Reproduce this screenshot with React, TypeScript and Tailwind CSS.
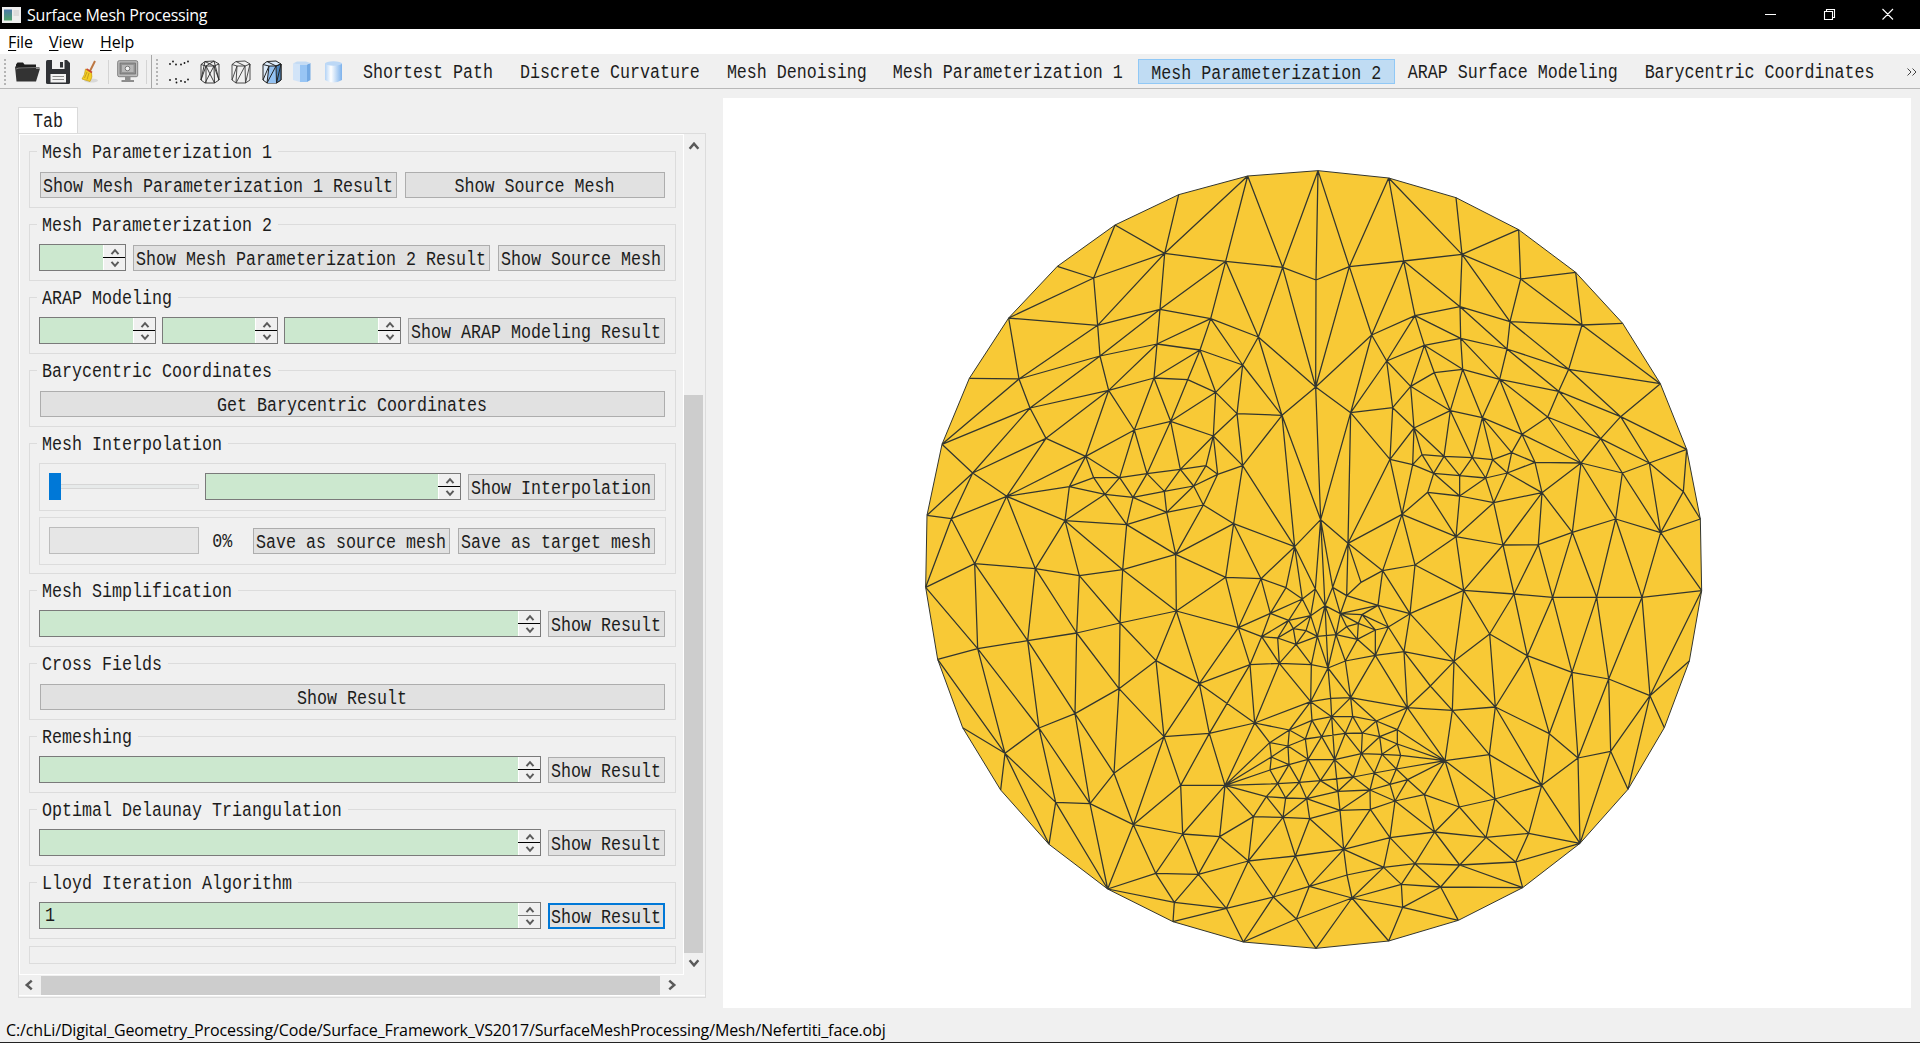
import React from 'react';

type Pt = [number, number];

/* Mesh vertices, grouped by patch. Units are thirds of a pixel. */
const PATCHES: Record<string, { at: Pt; pts: string }> = {
  A: {
    at: [0, 0],
    pts: '1224,62 1013,78 806,134 615,225 442,349 296,504 178,685 96,883 764,310 551,384 947,334 1118,352 1218,390 563,526 750,478 902,506 1045,561 327,687 570,618 741,582 870,600 998,645 1217,711 360,774 596,721 732,684 833,689 917,727 981,791 1116,796 408,865 673,840 782,814 910,858',
  },
  B: {
    at: [1170, 0],
    pts: '54,62 266,84 468,143 656,239 827,367 968,520 1081,701 1160,898 148,350 311,333 486,313 662,387 846,525 630,515 480,470 345,497 215,555 260,633 373,586 482,565 621,597 806,658 776,724 599,688 488,658 403,668 332,709 278,773 152,788 451,782 547,803 743,801 962,800 902,866 666,853 342,834',
  },
  C: {
    at: [0, 840],
    pts: '0,0 188,129 527,79 290,199 51,256 124,266 47,472 194,401 376,416 465,272 478,170 551,143 629,143 585,193 669,202 711,131 811,118 888,107 763,184 851,168 923,133 998,107 650,284 770,247 880,225 971,281 797,373 638,419 508,437 1154,350 1232,269 947,442 1053,446 799,543 630,579 500,609 353,632 203,656 83,688 985,593 738,692 868,761 627,776 1020,704 1128,473 1177,507 1216,477 1081,550 1245,527 1202,557 1136,571 1150,596 1188,602 1222,619 1055,620 1103,624 1158,643 1108,700 1204,704 1254,714 1202,815',
  },
  D: {
    at: [1170, 840],
    pts: '0,0 270,88 338,104 366,74 432,79 517,83 578,89 635,68 705,97 843,99 967,129 1048,99 1150,185 1201,267 401,130 479,137 557,144 622,129 383,187 479,198 581,218 726,188 306,253 144,340 468,320 609,345 715,344 817,307 947,267 1082,308 248,422 345,405 491,481 642,492 758,502 890,502 1026,502 1205,482 183,457 98,472 140,497 234,526 330,551 121,551 186,554 175,580 265,591 226,600 108,614 172,628 140,590 226,676 312,665 462,694 569,612 682,677 816,727 926,747 1050,797 1168,693 136,693 152,803 322,833 586,831 92,805 391,768',
  },
  E: {
    at: [0, 1620],
    pts: '0,0 158,113 272,300 417,463 593,597 789,695 1000,756 1218,775 285,190 387,114 495,71 437,337 540,341 612,250 670,404 762,140 898,130 1034,99 812,286 945,286 818,432 929,440 737,550 865,553 793,637 949,655 1015,513 1030,380 1119,382 1199,386 1069,320 1127,324 1190,326 1156,498 1090,621 1198,589 1159,687 1103,281 1168,277 1231,272 1080,240 1137,224 1194,208 1084,201 1079,158 1138,120 1134,168 1186,147 1206,91 1235,140',
  },
  F: {
    at: [1170, 1620],
    pts: '0,0 1093,113 984,298 840,460 668,593 475,691 266,753 95,80 152,23 158,79 229,93 136,130 187,129 239,140 292,119 292,162 246,193 302,196 184,191 104,209 160,261 223,249 289,237 323,269 270,283 210,300 114,304 285,333 373,314 211,358 120,361 435,212 478,351 457,61 568,194 585,327 725,286 748,131 834,204 932,184 586,51 686,430 558,442 404,426 270,443 131,478 141,555 251,532 345,521 479,525 647,516 422,591 304,583 308,652 156,624',
  },
};

const V: Record<string, Pt> = {};
Object.entries(PATCHES).forEach(([k, { at, pts }]) =>
  pts.split(' ').forEach((s, i) => {
    const [x, y] = s.split(',').map(Number);
    V[k + i] = [x + at[0], y + at[1]];
  }),
);

const RIM =
  'A0 B1 B2 B3 B4 B5 B6 B7 D13 D37 D59 F1 F2 F3 F4 F5 F6 E7 E6 E5 E4 E3 E2 E1 C38 C6 C4 A7 A6 A5 A4 A3 A2 A1';

/* Each entry is a hub vertex followed by the vertices it connects to. */
const STARS = `
A8:A2 A1 A3 A9 A13 A14 A10|A9:A3 A4 A5 A13|A5:A13 A17|A10:A1 A11 A14 A15 A16|A11:A1 A0 A12 A16 A22|A12:A0 A22
A13:A14 A17 A18|A14:A15 A18 A19|A15:A16 A19 A20 A21|A16:A21 A29 A22|A17:A6 A18 A23 A7|A18:A23 A19 A24|A19:A24 A20 A25
A20:A25 A26 A27 A21|A26:A32 A25 A27|A21:A27 A28 A29|A28:A29 A27 A33 C21|A27:A32 A33|A23:A24 A7 A30 C1|A30:A24 C1 C3 C2
A24:A25 A31 C2|A25:A31 A32|A31:A32 C2 C12 C15|A32:A33 C15 C16|A33:C16|A29:A22 C21 C29 C30|A22:C30
B8:A0 B1 B9 A12 A22 B16|B9:B1 B10 B16 B15 B14|B10:B1 B2 B3 B11 B14 B13|B11:B3 B4 B13 B12|B12:B4 B5 B13 B21 B6
B13:B14 B20 B21|B14:B15 B19 B20|B15:B16 B17 B18 B19|B16:B17 B28 A22|B17:B18 B26 B27 B28|B18:B19 B26 B24 B25|B25:B29 B24 B26
B19:B24 B20 B23|B20:B21 B23 B22|B21:B6 B22 B32|B32:B6 B22 B33 B7 D11|B22:B23 B31 B33|B23:B24 B30 B31 B34|B24:B29 B30
B26:B27 B29 B35|B27:B28 B35 D1|B28:A22 C30 D23 D1|B29:B30 B35 D4 D5|B30:B34 D5 D6 D7|B31:B34 B33 D9|B34:D7 D8 D9|B33:D9 D10 D11
B35:D1 D2 D3 D4|B7:D11 D12
C1:A7 C4 C5 C3|C5:C4 C3 C6 C7|C3:C7 C8 C9 C10 C2|C2:C10 C11 C12|C10:C11 C13 C9|C11:C12 C13|C12:C13 C14 C15|C13:C14 C9 C22
C14:C15 C18 C22 C23|C15:C16 C18|C16:C18 C17 C19|C17:C19 C20 A33|A33:C20 C21|C20:C21 C19 C24|C19:C18 C23 C24|C18:C23|C23:C24 C22 C26
C22:C9 C26 C27|C24:C26 C25|C25:C21 C26 C29 C31 C32|C21:C29|C9:C8 C28 C27|C8:C7 C28 C35 C36|C27:C28 C26 C33 C34|C26:C31 C33
C28:C34 C35|C7:C6 C36 C37|C37:C6 C38 C36|C35:C36 C34 C42|C34:C33 C40 C42|C33:C31 C39 C40 C41|C31:C32 C39|C40:C42 C41|C41:C39 C43
C39:C43 C32 C47 C54|C32:C29 C44 C47|C29:C30 C44 C45 C46|C44:C45 C47|C47:C45 C50 C54|C45:C46 C50 C49|C50:C49 C51 C54 C55|C49:C51 C53 C52 C48 C46
C51:C52 C55 C56|C52:C53 C56|C56:C53 C55 C57 C58|C54:C55 C57 C43|C55:C57|C57:C43 C58 C60|C58:C53 C59 C60|C59:C53 C60|C46:C48 C30|C48:C53 C30
D1:D2 D22 D23|D2:D3 D14 D22|D3:D4 D14|D4:D5 D14 D15|D5:D6 D15 D16|D6:D7 D16 D17|D7:D8 D17|D8:D9 D17 D21|D9:D10 D21 D27 D28
D10:D11 D28 D29|D11:D12 D29|D12:D13 D29|D29:D13 D37 D36|D14:D15 D18 D19|D15:D16 D19|D16:D17 D19 D20|D17:D20 D21|D18:D19 D22 D24
D19:D20 D24|D20:D21 D24 D25|D21:D25 D26 D27|D22:D23 D24 D30 D31|D24:D25 D31 D32|D25:D26 D32 D33|D26:D33 D34 D27|D27:D28 D34 D35
D28:D29 D35 D36|D36:D35 D37 D57 D58|D33:D32 D34 D54 D55|D34:D35 D55 D56|D35:D56 D57|D30:D31 D38 D41 D42 D23|D31:D32 D42|D32:D42 D53 D54
D58:D37 D59 D57|D54:D53 D55 D63|D55:D56 D63|D56:D57|D42:D53 D52 D41 D46|D52:D53 D51 D62 D65 D46|D65:D53 D62 F33|D53:D63 F33
D51:D46 D47 D49 D60 D61 D62|D60:D61 C59 D49 D48|C59:D48 C48 D64 D61|D64:C60 D61 F7|D61:D62|D23:C30 D39 D40 D38|C30:C46 D39
D39:C48 D40 D43|D40:D38 D41 D43|D41:D44 D46 D43|D43:D44 D45 D50 D48 C48|D44:D45 D46 D47|D45:D50 D49 D47|D47:D46 D49|D48:D50 D49 C48 C53|D50:D49
E8:C38 C37 E1 E2 E3 E9 E11|E9:C37 C36 E10 E11 E12|E10:C36 C35 C42 E12 E13|C42:E13 E15|E15:C40 C41 E13 E14 E16 E18|E16:C41 C43 E17 E18 E19
E17:C41 C43 C57 C60 E19 E45 E44|C60:E45 E48 F7|E11:E12 E3 E4|E12:E13 E4 E14|E13:E14|E18:E19 E14 E20|E19:E20 E21 E27 E30 E37 E40 E43 E44
E44:E45 E46 E43|E43:E46 E41 E40|E40:E41 E37|E37:E41 E38 E30 E31|E30:E31 E28 E27|E31:E32 E28 E38|E32:E28 E38 E39 F26 F30 E29
E38:E39 E41 E42|E41:E42 E46|E46:E42 E45 E47|E45:E47 E48|E47:E48 E49 E42|E42:E49 E39 F19|E48:E49 F7|E29:E28 E33 F30 F45|E28:E27 E26 E33
E27:E21 E26|E33:E26 E34 E35 F45|E34:E26 E35 E36 E6 E25|E26:E25 E23 E21|E21:E20 E23|E20:E23 E22 E14|E14:E22 E4|E22:E4 E23 E24
E23:E24 E25|E24:E4 E5 E25|E25:E5 E6|E36:E6 E7 E35
D58:F1 F2 F39|D57:F38 F39|D56:F37 F38|D55:F37|D63:F37 F34 F33 F36|F33:D62 F31 F34|D62:F31 F10 F14|F34:F31 F35 F36|F37:F36 F38
F38:F36 F39 F3|F39:F3 F2|F36:F3 F35 F41|F35:F31 F32 F41 F42|F31:F32 F28 F23 F22 F17 F15 F14|F32:F28 F42 F43|F28:F23 F27 F43
F23:F22 F24 F27|F22:F21 F24 F17|F24:F21 F25 F27|F25:F21 F20 F26 F29 F30 F27|F27:F29 F44 F43|F29:F30 F45 F44|F30:F26 F45|F26:E39 F20
F20:E39 F19|F19:F26 E39 E49 F11 F7|F7:E49 F11 F9 D61|D61:F9 F10|F9:F11 F12 F10|F10:F12 F13 F14|F12:F11 F13 F18|F13:F14 F15 F16 F18
F11:F18 E49|F18:F19 F16 F20 F21|F16:F15 F17 F21 F22|F15:F14 F17|F21:F20|F45:E35 F44 F47 F46|F46:E35 F47 F54|F54:E35 E36 E7 F6 F52 F53
F47:F44 F54 F52 F48|F48:F44 F43 F49 F52 F51|F43:F44 F42 F49|F42:F41 F50 F49|F41:F3 F50|F50:F3 F4 F49|F49:F4 F51|F51:F4 F5 F52 F53
F53:F52 F5 F6`;

const rimPath = 'M' + RIM.split(' ').map((n) => V[n].join(' ')).join('L') + 'Z';
const edgePath = STARS.trim()
  .split(/[|\n]/)
  .map((s) => {
    const [hub, rest] = s.split(':');
    return rest
      .trim()
      .split(' ')
      .map((n) => `M${V[hub].join(' ')}L${V[n].join(' ')}`)
      .join('');
  })
  .join('');

function MeshView() {
  return (
    <svg width="840" height="820" viewBox="0 0 2520 2460" className="ml-[187px] mt-[52px] block">
      <path d={rimPath} fill="#f8c936" stroke="#33362f" strokeWidth="3" />
      <path d={edgePath} fill="none" stroke="#33362f" strokeWidth="3.8" />
    </svg>
  );
}

const UI = "font-['Open_Sans',sans-serif] text-[16px] whitespace-pre";

/* Fixed-pitch label: ten pixels per character, stretched to tall, narrow letterforms. */
function Mono({ children, className = '' }: { children: React.ReactNode; className?: string }) {
  return (
    <span
      className={`inline-block scale-y-[1.16] font-['Liberation_Mono',monospace] text-[16.67px] leading-[20px] whitespace-pre text-[#1c1c1c] ${className}`}
    >
      {children}
    </span>
  );
}

function Btn({ children, className = '', focus = false }: { children: string; className?: string; focus?: boolean }) {
  return (
    <button
      className={`flex h-[26px] shrink-0 items-center justify-center bg-[#e1e1e1] pt-[3px] ${
        focus ? 'border-2 border-[#0078d7]' : 'border border-[#adadad]'
      } ${className}`}
    >
      <Mono className="-ml-px">{children}</Mono>
    </button>
  );
}

function Chevron({ className = '' }: { className?: string }) {
  return (
    <svg width="10" height="8" viewBox="0 0 10 8" className={className}>
      <path d="M1.5 6.2 5 2.2 8.5 6.2" fill="none" stroke="#5a5a5a" strokeWidth="2" />
    </svg>
  );
}

function Spin({ className = '', value = '', soft = false }: { className?: string; value?: string; soft?: boolean }) {
  return (
    <div className={`flex h-[27px] shrink-0 border border-[#7a7a7a] bg-[#cce8cf] ${className}`}>
      <div className="flex flex-1 items-center pl-[5px] pt-px"><Mono>{value}</Mono></div>
      <div className="flex w-[22px] flex-col border-l border-white bg-[#f0f0f0]">
        <div className="flex h-[12px] items-center justify-center pt-px">
          <Chevron />
        </div>
        <div className={`-ml-px h-px ${soft ? 'bg-[#7a7a7a]' : 'bg-black'}`} />
        <div className="flex h-[12px] items-center justify-center">
          <Chevron className="rotate-180" />
        </div>
      </div>
    </div>
  );
}

function Group({ title, children, tall = false }: { title: string; children: React.ReactNode; tall?: boolean }) {
  return (
    <section className={`relative mb-4 border border-[#dcdcdc] px-[10px] pt-[19px] ${tall ? 'h-[131px]' : 'h-[57px]'}`}>
      <h2 className="absolute -top-[9px] left-[7px] flex bg-[#f0f0f0] pl-[5px] pr-[6px]"><Mono>{title}</Mono></h2>
      {children}
    </section>
  );
}

function ResultRow({ value = '', focus = false }: { value?: string; focus?: boolean }) {
  return (
    <div className="-ml-px flex items-end justify-between">
      <Spin className="w-[502px]" value={value} soft={focus} />
      <Btn className="w-[117px]" focus={focus}>Show Result</Btn>
    </div>
  );
}

function Grip() {
  return <div className="h-[26px] w-0 border-l-2 border-dotted border-[#b4b4b4]" />;
}

const TOOLS: [string, string][] = [
  ['Shortest Path', 'ml-[20px]'],
  ['Discrete Curvature', 'ml-[27px]'],
  ['Mesh Denoising', 'ml-[27px]'],
  ['Mesh Parameterization 1', 'ml-[26px]'],
];

const CYL = 'M3 4.5 7 1.5 16 1 21 4 21 20 16.500 23 7 23 3 20Z';

function ToolIcons() {
  return (
    <div className="flex h-[33px] items-center">
      <svg className="ml-[9px]" width="25" height="22" viewBox="0 0 25 22">
        <path d="M1 3.500 2.500 1.500H8L9.500 3.500H21V8H1Z" fill="#1e1e1e" />
        <path d="M0 5.500H3L6 7.500H25L21 20.500H1.500Z" fill="#333" />
        <path d="M1 8 4 7 24.500 6.500" stroke="#777" fill="none" />
      </svg>
      <svg className="ml-[6px]" width="24" height="24" viewBox="0 0 24 24">
        <path d="M1.500 0H21L24 3V22.500Q24 24 22.500 24H1.500Q0 24 0 22.500V1.500Q0 0 1.500 0Z" fill="#303236" />
        <path d="M6 0H18.500V9H6ZM4.500 14H20V22.500H4.500Z" fill="#f2f2f2" />
        <path d="M14 2H17V7.500H14Z" fill="#303236" />
        <path d="M6.500 16.500H18M6.500 19.500H18" stroke="#888" />
      </svg>
      <svg className="ml-[11px]" width="18" height="24" viewBox="0 0 18 24">
        <ellipse cx="10" cy="20.500" rx="7" ry="2" fill="#d8d8d8" />
        <path d="M14 1 8 13" stroke="#bd7742" strokeWidth="2" />
        <path d="M4.500 9 10.500 12.500Q12 17 9 21.500L1 19Q4 15 4.500 9Z" fill="#f4cf25" stroke="#c79d16" strokeWidth=".7" />
        <path d="M5.500 9 11 12.500" stroke="#c94832" strokeWidth="1.600" />
        <path d="M6 12 3.500 18M8 13 6 19.500" stroke="#b58b18" strokeWidth=".7" />
      </svg>
      <div className="ml-[9px] h-6 w-px bg-[#d4d4d4]" />
      <svg className="ml-2" width="22" height="23" viewBox="0 0 22 23">
        <rect x=".7" y=".7" width="20" height="16" rx="1.500" fill="#bcbcbc" stroke="#818181" />
        <rect x="3" y="3" width="15.500" height="11" fill="#929292" stroke="#686868" strokeWidth=".7" />
        <rect x="5" y="5" width="11.500" height="7" fill="#b7b7b7" />
        <circle cx="10.500" cy="8.500" r="2.300" fill="#f4f4f4" stroke="#777" />
        <path d="M8 17H13.500V20H17V22H4.500V20H8Z" fill="#8d8d8d" />
      </svg>
      <div className="ml-[7px] h-6 w-px bg-[#d4d4d4]" />
      <div className="ml-[4px] h-[33px] w-px bg-[#a8a8a8]" />
      <div className="mr-[10px] ml-[4px]"><Grip /></div>
      <svg width="22" height="24" viewBox="0 0 22 24" fill="#111">
        {[[2, 4], [5, 1.500], [8, 4.500], [13, 4.500], [16.500, 3], [20, 1.500], [2, 20], [8, 19], [8.500, 22.500], [13, 21], [17, 22], [20, 19.500]].map(
          ([x, y]) => <circle key={`${x}-${y}`} cx={x} cy={y} r=".9" />,
        )}
      </svg>
      <svg className="ml-2" width="24" height="24" viewBox="0 0 24 24" fill="none" stroke="#2a2a2a" strokeWidth=".9">
        <path d={`${CYL}M3 4.500 8 6 16 6 21 4M8 6 8 23M16 6 16.500 23M7 1.500 16 6M8 6 16 1M8 6 3 20M8 6 16.500 23M16 6 7 23M16 6 21 20M7 1.500 3 20M16 1 21 20`} />
      </svg>
      <svg className="ml-[7px]" width="24" height="24" viewBox="0 0 24 24" fill="none" stroke="#3a3a3a" strokeWidth=".9">
        <path d={`${CYL}M3 4.500 8 6 16 6 21 4M8 6 7 23M16 6 16.500 23M7 1.500 16 6M16 6 7 23M8 6 3 20M21 4 16.500 23`} />
      </svg>
      <svg className="ml-[7px]" width="24" height="24" viewBox="0 0 24 24" stroke="#222" strokeWidth="1">
        <path d={CYL} fill="#dcebfa" />
        <path d="M9 6H16L16.500 23H7Z" fill="#94c2f2" stroke="none" />
        <path d="M16 6 21 4V20L16.500 23Z" fill="#4d85bd" />
        <path d="M3 4.500 9 6 16 6 21 4M9 6 7 23M16 6 7 23M9 6 3 20M7 1.500 16 6M21 4 16.500 23" fill="none" />
      </svg>
      <svg className="ml-[8px]" width="20" height="24" viewBox="0 0 20 24">
        <path d="M1 3.500 8 4.500V22L1 20Z" fill="#d2e4f8" />
        <path d="M8 4.500 15 4.500V22H8Z" fill="#98c5f4" />
        <path d="M15 4.500 18.500 3V20L15 22Z" fill="#73a9e3" />
        <path d="M1 3.500 5 1.500 14 1.500 18.500 3 15 4.500 8 4.500Z" fill="#c4dbf4" />
      </svg>
      <svg className="ml-[12px] -mr-px" width="20" height="24" viewBox="0 0 20 24">
        <defs>
          <linearGradient id="cyl">
            <stop offset="0" stopColor="#b3d3f6" />
            <stop offset=".35" stopColor="#fff" />
            <stop offset="1" stopColor="#7db2ec" />
          </linearGradient>
        </defs>
        <path d="M1 3.500V20Q9 25 18 20V3.500Z" fill="url(#cyl)" />
        <ellipse cx="9.500" cy="3.500" rx="8.500" ry="2.200" fill="#bcd8f6" />
      </svg>
    </div>
  );
}

export default function App() {
  return (
    <div className="flex h-[1043px] w-[1920px] flex-col overflow-hidden border-b border-[#222] bg-[#f0f0f0]">
      <header className="flex h-[29px] shrink-0 items-center bg-black text-white">
        <svg className="ml-[2px]" width="19" height="16" viewBox="0 0 19 16">
          <defs>
            <linearGradient id="app" x2="0" y2="1">
              <stop stopColor="#4b78a8" />
              <stop offset="1" stopColor="#4fa46c" />
            </linearGradient>
          </defs>
          <path d="M0 0H19V16H0Z" fill="#eee" />
          <path d="M2 2.500H10V13.500H2Z" fill="url(#app)" />
          <path d="M11.500 3H17V9H11.500Z" fill="#dcdcdc" />
        </svg>
        <div className={`${UI} ml-[6px] w-[184px] tracking-[-0.22px]`}>Surface Mesh Processing</div>
        <svg className="ml-auto mr-[26px]" width="130" height="16" viewBox="0 0 130 16" fill="none" stroke="#fff" strokeWidth="1.100">
          <path d="M1 7.500H12M60.500 4.500H68.500V12.500H60.500ZM62.500 4V2.500H70.500V10.500H69M118.500 2 129 12.500M129 2 118.500 12.500" />
        </svg>
      </header>
      <nav className={`${UI} flex h-[26px] shrink-0 items-center border-b border-[#f0f0f0] bg-white pl-2 text-black tracking-[-0.1px]`}>
        <span className="w-[41px]"><u className="underline-offset-2">F</u>ile</span>
        <span className="w-[51px]"><u className="underline-offset-2">V</u>iew</span>
        <span><u className="underline-offset-2">H</u>elp</span>
      </nav>
      <div className="flex h-[34px] shrink-0 items-center border-b border-[#b8b8b8] pl-1">
        <Grip />
        <ToolIcons />
        {TOOLS.map(([label, gap]) => (
          <Mono key={label} className={`mt-[3px] ${gap}`}>{label}</Mono>
        ))}
        <div className="ml-[15px] flex h-[25px] w-[257px] items-center justify-center border border-[#90c8f6] bg-[#c0dcf3] pt-[4px]"><Mono>Mesh Parameterization 2</Mono></div>
        <Mono className="mt-[3px] ml-[13px]">ARAP Surface Modeling</Mono>
        <Mono className="mt-[3px] ml-[27px]">Barycentric Coordinates</Mono>
        <svg className="ml-[32px]" width="10" height="8" viewBox="0 0 10 8" fill="none" stroke="#444">
          <path d="M.5.500 4 4 .5 7.500M5.500.500 9 4 5.500 7.500" />
        </svg>
      </div>

      <main className="flex h-[923px] shrink-0">
        <div className="w-[705px] shrink-0 pl-[18px] pt-[18px]">
          <div className="flex h-[26px] w-[60px] items-center border border-b-0 border-[#d9d9d9] bg-white pl-[14px] pt-[2px]"><Mono>Tab</Mono></div>
          <div className="flex h-[865px] w-[688px] flex-col border border-[#dcdcdc]">
            <div className="flex h-[841px]">
              <div className="h-[841px] w-[665px] shrink-0 border border-white pl-[9px] pr-[7px] pt-[16px]">
                <Group title="Mesh Parameterization 1">
                  <div className="flex justify-between pt-px"><Btn className="w-[357px]">Show Mesh Parameterization 1 Result</Btn><Btn className="w-[260px]">Show Source Mesh</Btn></div>
                </Group>
                <Group title="Mesh Parameterization 2">
                  <div className="-ml-px flex items-end"><Spin className="w-[87px]" /><Btn className="ml-[7px] w-[357px]">Show Mesh Parameterization 2 Result</Btn><Btn className="ml-auto w-[167px]">Show Source Mesh</Btn></div>
                </Group>
                <Group title="ARAP Modeling">
                  <div className="-ml-px flex items-end gap-[6px]"><Spin className="w-[117px]" /><Spin className="w-[116px]" /><Spin className="w-[117px]" /><Btn className="ml-auto w-[257px]">Show ARAP Modeling Result</Btn></div>
                </Group>
                <Group title="Barycentric Coordinates">
                  <Btn className="mt-px w-full">Get Barycentric Coordinates</Btn>
                </Group>
                <Group title="Mesh Interpolation" tall>
                  <div className="-mx-px mb-[6px] flex h-[48px] items-end border border-[#dcdcdc] pr-[10px] pl-[9px] pb-[10px]">
                    <div className="flex h-[27px] w-[150px] items-center">
                      <div className="h-[27px] w-[12px] bg-[#0078d7]" />
                      <div className="h-[5px] flex-1 border border-l-0 border-[#d6d6d6] bg-[#e7eaea]" />
                    </div>
                    <Spin className="ml-[6px] w-[256px]" />
                    <Btn className="ml-auto w-[187px]">Show Interpolation</Btn>
                  </div>
                  <div className="-mx-px flex h-[48px] items-end border border-[#dcdcdc] pr-[10px] pl-[9px] pb-[10px]">
                    <div className="h-[27px] w-[151px] border border-[#bcbcbc] bg-[#e6e6e6]" />
                    <Mono className="mb-[2px] ml-[13px] w-[41px]">0%</Mono>
                    <Btn className="w-[197px]">Save as source mesh</Btn>
                    <Btn className="ml-[8px] w-[197px]">Save as target mesh</Btn>
                  </div>
                </Group>
                <Group title="Mesh Simplification"><ResultRow /></Group>
                <Group title="Cross Fields">
                  <Btn className="mt-px w-full">Show Result</Btn>
                </Group>
                <Group title="Remeshing"><ResultRow /></Group>
                <Group title="Optimal Delaunay Triangulation"><ResultRow /></Group>
                <Group title="Lloyd Iteration Algorithm"><ResultRow value="1" focus /></Group>
                <div className="-mt-[9px] h-[18px] border border-[#dcdcdc]" />
              </div>
              <div className="flex w-[19px] flex-col items-center">
                <Chevron className="mt-[8px] scale-125" />
                <div className="mt-[245px] h-[558px] w-[19px] bg-[#cdcdcd]" />
                <Chevron className="mt-[6px] rotate-180 scale-125" />
              </div>
            </div>
            <div className="flex h-[20px] items-center">
              <Chevron className="ml-[5px] -rotate-90 scale-125" />
              <div className="mx-[7px] h-[19px] w-[619px] bg-[#cdcdcd]" />
              <Chevron className="rotate-90 scale-125" />
            </div>
            <div className="h-px bg-white" />
          </div>
        </div>
        <div className="ml-[18px] mt-[9px] h-[910px] w-[1188px] bg-white">
          <MeshView />
        </div>
      </main>
      <footer className={`${UI} flex-1 pl-[6px] leading-[37px] text-black tracking-[-0.125px]`}>
        C:/chLi/Digital_Geometry_Processing/Code/Surface_Framework_VS2017/SurfaceMeshProcessing/Mesh/Nefertiti_face.obj
      </footer>
    </div>
  );
}
